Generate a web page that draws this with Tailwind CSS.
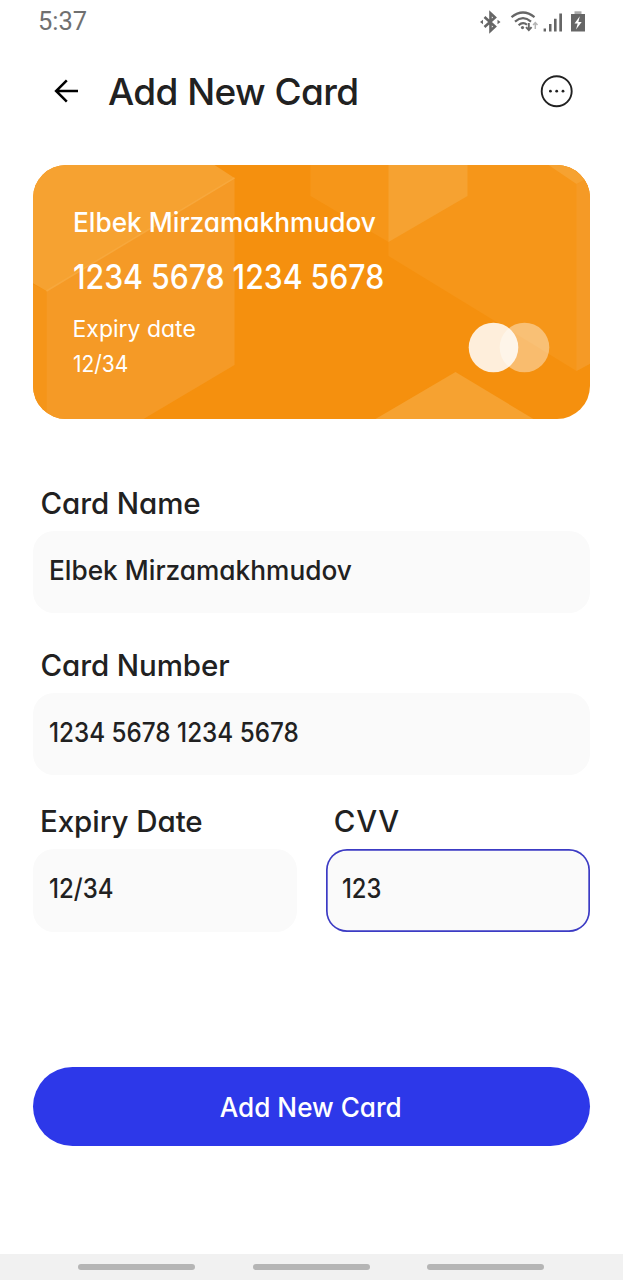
<!DOCTYPE html>
<html lang="en">
<head>
<meta charset="utf-8">
<meta name="viewport" content="width=device-width">
<title>Add New Card</title>
<script src="https://cdn.jsdelivr.net/npm/@tailwindcss/browser@4"></script>
</head>
<body class="flex h-[1280px] w-[623px] flex-col overflow-hidden bg-white font-['Inter',sans-serif] font-medium text-[#212121] [font-feature-settings:'cv11']">
  <!-- Status bar -->
  <div class="flex h-[44px] items-center justify-between pr-[36px] pl-[38px]">
    <span class="font-['Roboto',sans-serif] text-[25.5px] font-normal leading-none text-[#707070]">5:37</span>
    <svg class="h-[26px] w-[107px]" viewBox="0 0 107 26" fill="none">
      <path d="M4.500 8L15 17.500L10.500 21.700V4.300L15 8.500L4.500 18" stroke="#666" stroke-width="2.600"/>
      <path d="M0 13l3-2.200v4.400zM20.500 13l-3-2.200v4.400z" fill="#666"/>
      <path d="M31.500 8.200Q43 -1.200 54.500 8.200M35 12.600Q43 5.800 51 12.600M38.600 16.200Q43 12.200 47 15.800" stroke="#666" stroke-width="2.200"/>
      <circle cx="42.500" cy="18.600" r="1.600" fill="#666"/>
      <path d="M48.800 14v7M46 18.200l2.800 2.900l2.800-2.900" stroke="#666" stroke-width="1.900"/>
      <path d="M55.300 20v-6.500M53.100 16l2.200-2.400l2.200 2.400" stroke="#b5b5b5" stroke-width="1.500"/>
      <path d="M63.600 19.500h2.400v3h-2.400zM69 15h2.500v7.500H69zM74 9.800h2.600v12.700H74zM79.300 4.500H82v18h-2.700z" fill="#666"/>
      <path d="M94.500 2.300h7V5h-7z" fill="#aaa"/>
      <path d="M91 5h14v17.500H91z" fill="#666"/>
      <path d="M99.800 7.200L94.500 14.400h3.200L96 20.400l5.700-7.500h-3.300z" fill="#fff"/>
    </svg>
  </div>

  <!-- Header -->
  <header class="flex h-[96px] items-center pr-[50px] pl-[54px]">
    <svg class="-mt-0.5 h-[24px] w-[26px] shrink-0" viewBox="0 0 26 24" fill="none" stroke="#000" stroke-width="2.500"><path d="M24 12H2.500M12.800 1.300L2.100 12l10.700 10.700"/></svg>
    <h1 class="-mt-0.5 ml-[28px] flex-1 text-[37px] leading-none tracking-[-0.6px]">Add New Card</h1>
    <svg class="-mt-0.5 h-[34px] w-[34px]" viewBox="0 0 34 34"><circle cx="17.700" cy="17.200" r="15" fill="none" stroke="#212121" stroke-width="1.900"/><circle cx="11.400" cy="17.200" r="1.400" fill="#212121"/><circle cx="17.700" cy="17.200" r="1.400" fill="#212121"/><circle cx="24" cy="17.200" r="1.400" fill="#212121"/></svg>
  </header>

  <main class="flex flex-col pt-[25px] pr-[33px] pl-[32.5px]">
    <!-- Bank card -->
    <section class="grid h-[254px] overflow-hidden rounded-[33px] bg-[#f5900e] text-white">
      <svg class="col-start-1 row-start-1 h-[254px] w-[558px]" viewBox="-0.5 0 558 254">
        <path d="M-1 119L13 126V254H-1z" fill="#f59519"/>
        <path d="M13 126L201 14V200L110 254H13z" fill="#f59a26"/>
        <path d="M-1 0H181L201 13L13 126L-1 118z" fill="#f6a231"/>
        <path d="M13 126L201 13" stroke="#f7a83d" stroke-width="1.500"/>
        <path d="M277 0V31L355 77V91L543 206L558 198V0z" fill="#f69619"/>
        <path d="M355 0H434V31L355 77z" fill="#f6a231"/>
        <path d="M543 19L558 11V198L543 206z" fill="#f59a26"/>
        <path d="M515 0H558V11L543 19z" fill="#f6a231"/>
        <path d="M342 254L422 207L500 254z" fill="#f6a231"/>
        <circle cx="491" cy="182.500" r="24.800" fill="#fff" fill-opacity=".4"/>
        <circle cx="460" cy="182.500" r="24.800" fill="#fff" fill-opacity=".85"/>
      </svg>
      <div class="z-10 col-start-1 row-start-1 flex flex-col pt-[37px] pl-[40px]">
        <p class="origin-left scale-x-[0.955] text-[27.5px] leading-[40px]">Elbek Mirzamakhmudov</p>
        <p class="mt-[10px] origin-left scale-x-[0.902] text-[33.5px] leading-[50px]">1234 5678 1234 5678</p>
        <p class="mt-[10px] text-[23px] font-normal leading-[35px]">Expiry date</p>
        <p class="origin-left scale-x-[0.91] text-[23px] font-normal leading-[35px]">12/34</p>
      </div>
    </section>

    <!-- Form -->
    <form class="mt-[56px] flex flex-col">
      <label class="pl-[8px] text-[29.5px] leading-[56px] tracking-[-0.1px]">Card Name</label>
      <div class="h-[82px] rounded-[21px] bg-[#fafafa] pl-[16px] text-[27.5px] leading-[79px]"><p class="origin-left scale-x-[0.955]">Elbek Mirzamakhmudov</p></div>
      <label class="mt-[24px] pl-[8px] text-[29.5px] leading-[56px] tracking-[-0.1px]">Card Number</label>
      <div class="h-[82px] rounded-[21px] bg-[#fafafa] pl-[16px] text-[27px] leading-[79px]"><p class="origin-left scale-x-[0.898]">1234 5678 1234 5678</p></div>
      <div class="mt-[18px] grid grid-cols-2 gap-[29px]">
        <div>
          <label class="block pl-[7.5px] text-[29.5px] leading-[56px] tracking-[-0.05px]">Expiry Date</label>
          <div class="h-[83px] rounded-[21px] bg-[#fafafa] pl-[16px] text-[27px] leading-[79px]"><p class="origin-left scale-x-[0.89]">12/34</p></div>
        </div>
        <div>
          <label class="block pl-[8px] text-[29.5px] leading-[56px] tracking-[0.8px]">CVV</label>
          <div class="h-[83px] rounded-[21px] bg-[#fafafa] pl-[16px] text-[27px] leading-[79px] shadow-[inset_0_0_0_1.7px_#3c3bc4]"><p class="origin-left scale-x-[0.88]">123</p></div>
        </div>
      </div>
      <button type="button" class="mt-[135px] h-[79px] rounded-full bg-[#2d38e9] text-[27.5px] leading-[78px] text-white"><span class="inline-block scale-x-[0.95]">Add New Card</span></button>
    </form>
  </main>

  <!-- Navigation bar -->
  <nav class="mt-auto flex h-[26px] items-center justify-between bg-[#f1f1f1] pr-[79px] pl-[78px]">
    <span class="h-[6px] w-[117px] rounded-full bg-[#b5b5b5]"></span>
    <span class="h-[6px] w-[117px] rounded-full bg-[#b5b5b5]"></span>
    <span class="h-[6px] w-[117px] rounded-full bg-[#b5b5b5]"></span>
  </nav>
</body>
</html>
